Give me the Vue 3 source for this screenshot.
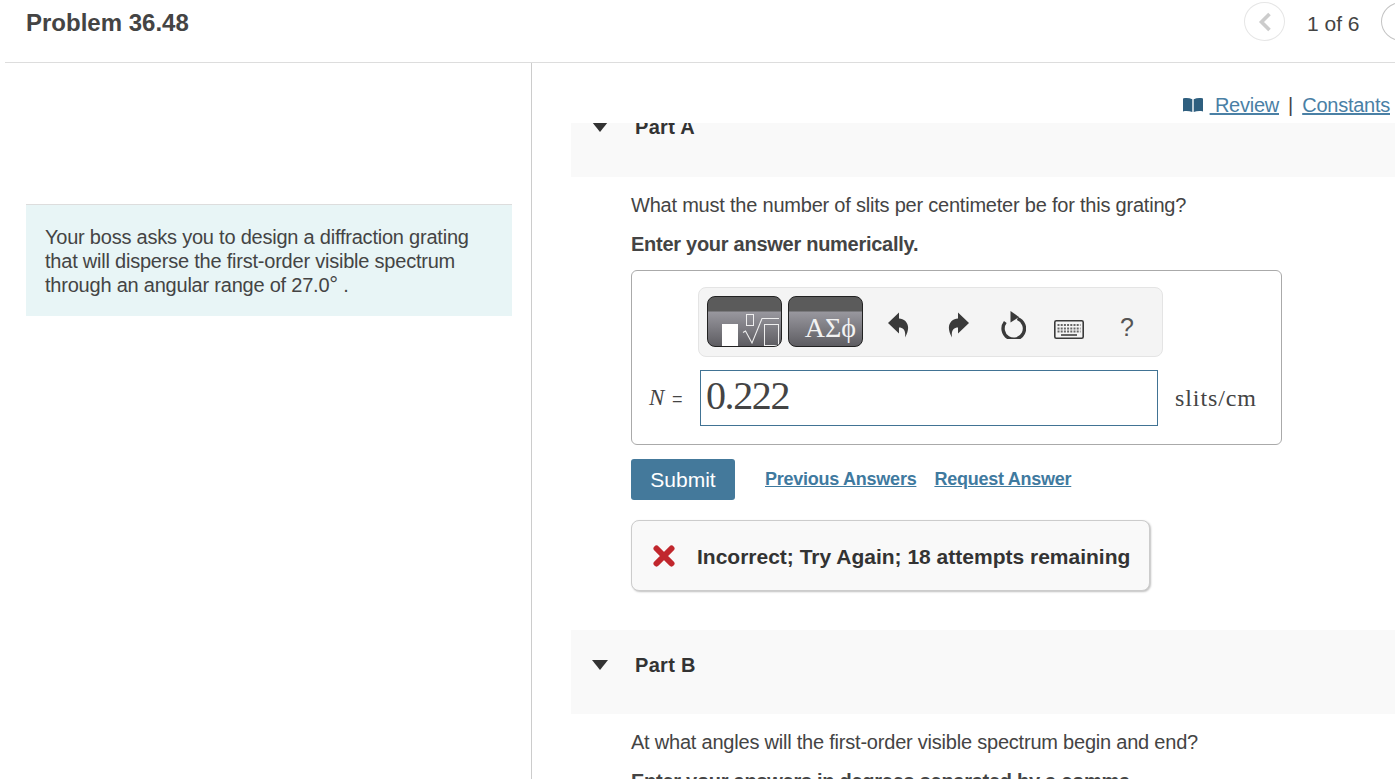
<script setup>
const parts = {
  a: 'What must the number of slits per centimeter be for this grating?',
  b: 'At what angles will the first-order visible spectrum begin and end?'
}
</script>

<template>
  <div class="page">
    <header class="top">
      <h1 class="title">Problem 36.48</h1>
      <nav class="pager">
        <button class="circle prev" aria-label="Previous">
          <svg width="14" height="20" viewBox="0 0 14 20"><path d="M11.5 2 L3.5 10 L11.5 18" fill="none" stroke="#ccc" stroke-width="3.6"/></svg>
        </button>
        <span class="count">1 of 6</span>
        <button class="circle next" aria-label="Next"></button>
      </nav>
    </header>

    <div class="columns">
      <aside class="left">
        <div class="intro">
          Your boss asks you to design a diffraction grating that will disperse the first-order visible spectrum through an angular range of 27.0<span class="deg">°</span> .
        </div>
      </aside>

      <main class="right">
        <div class="tools">
          <svg class="book" width="20" height="14" viewBox="0 0 20 14"><path d="M0 0.5 C3 -0.2 6.5 0 9.3 1.2 V14 C6.5 13 3 12.8 0 13.4 Z M20 0.5 C17 -0.2 13.5 0 10.7 1.2 V14 C13.5 13 17 12.8 20 13.4 Z" fill="#2f5f7f"/></svg>
          <a class="link">&nbsp;Review</a>
          <span class="pipe">|</span>
          <a class="link">Constants</a>
        </div>

        <div class="scroll">
          <section class="part-head clipped">
            <span class="tri"></span><span class="part-name">Part A</span>
          </section>

          <div class="body">
            <p class="q">{{ parts.a }}</p>
            <p class="ins">Enter your answer numerically.</p>

            <div class="answer">
              <div class="toolbar">
                <div class="tbtn">
                  <svg class="tpl" width="75" height="36" viewBox="0 0 75 36">
                    <rect x="15" y="14" width="16" height="22" fill="#fff"/>
                    <rect x="39.5" y="4.5" width="7" height="11" fill="none" stroke="#eee" stroke-width="1"/>
                    <path d="M36 22.5 L38.5 21 L45 33 L55 8.5 H72" fill="none" stroke="#eee" stroke-width="1.1"/>
                    <rect x="57.5" y="14.5" width="14" height="21" fill="none" stroke="#eee" stroke-width="1"/>
                  </svg>
                </div>
                <div class="tbtn greek"><span>ΑΣϕ</span></div>

                <svg class="ic undo" width="22" height="26" viewBox="0 0 22 26"><path d="M0 11 L11 0.5 V6.5 C18 7 24 13.5 17 25.5 C18 18.5 15.5 15.5 11 15.5 V21.5 Z" fill="#3a3a3a"/></svg>
                <svg class="ic redo" width="22" height="26" viewBox="0 0 22 26"><path d="M22 11 L11 0.5 V6.5 C4 7 -2 13.5 5 25.5 C4 18.5 6.5 15.5 11 15.5 V21.5 Z" fill="#3a3a3a"/></svg>
                <svg class="ic reset" width="26" height="28" viewBox="0 0 26 28">
                  <path d="M5.3 11 A10.7 10.7 0 1 0 17.5 7.5" fill="none" stroke="#3a3a3a" stroke-width="3.4"/>
                  <path d="M10.5 0 L19 6 L10.5 11.5 Z" fill="#3a3a3a"/>
                </svg>
                <svg class="ic kbd" width="30" height="19" viewBox="0 0 30 19">
                  <rect x="0.8" y="0.8" width="28.4" height="17.4" rx="1.5" fill="#f4f4f4" stroke="#3a3a3a" stroke-width="1.6"/>
                  <path d="M3.5 5 H26.5 M3.5 8.5 H26.5 M3.5 11.5 H26.5" stroke="#666" stroke-width="2" stroke-dasharray="2 1.2"/>
                  <path d="M7 15 H23" stroke="#555" stroke-width="1.8"/>
                </svg>
                <span class="help">?</span>
              </div>

              <div class="row">
                <span class="label"><i>N</i> <span class="eq">=</span></span>
                <div class="input">0.222</div>
                <span class="unit">slits/cm</span>
              </div>
            </div>

            <div class="actions">
              <button class="submit">Submit</button>
              <a class="act first-act">Previous Answers</a>
              <a class="act">Request Answer</a>
            </div>

            <div class="feedback">
              <svg width="22" height="22" viewBox="0 0 22 22"><path d="M3.5 3.5 L18.5 18.5 M18.5 3.5 L3.5 18.5" stroke="#c1272d" stroke-width="6" stroke-linecap="round"/></svg>
              <span>Incorrect; Try Again; 18 attempts remaining</span>
            </div>
          </div>

          <section class="part-head">
            <span class="tri"></span><span class="part-name">Part B</span>
          </section>

          <div class="body">
            <p class="q">{{ parts.b }}</p>
            <p class="ins">Enter your answers in degrees separated by a comma.</p>
          </div>
        </div>
      </main>
    </div>
  </div>
</template>

<style>
html, body { margin: 0; overflow: hidden; background: #fff; }
</style>

<style scoped>
.page {
  width: 1395px;
  height: 779px;
  overflow: hidden;
  display: flex;
  flex-direction: column;
  font-family: "Liberation Sans", Arial, sans-serif;
  color: #444;
}
.top {
  height: 63px;
  margin-left: 5px;
  border-bottom: 1px solid #ddd;
  box-sizing: border-box;
  display: flex;
  justify-content: space-between;
  flex: none;
  overflow: hidden;
}
.title {
  margin: 9px 0 0 21px;
  font-size: 24px;
  line-height: 28px;
  font-weight: 700;
  color: #444;
}
.pager {
  display: flex;
  align-items: flex-start;
  width: 151px;
  flex: none;
}
.circle {
  width: 41px;
  height: 39px;
  margin-top: 2px;
  border-radius: 50%;
  background: #fff;
  border: 1px solid #e6e6e6;
  padding: 0;
  display: flex;
  align-items: center;
  justify-content: center;
  flex: none;
}
.next { border-color: #c4c4c4; margin-left: 21px; }
.count {
  margin: 12px 0 0 22px;
  font-size: 21px;
  line-height: 24px;
  white-space: nowrap;
}
.columns { flex: 1; display: flex; min-height: 0; }
.left {
  flex: none;
  width: 532px;
  box-sizing: border-box;
  border-right: 1px solid #ccc;
  padding: 141px 19px 0 26px;
}
.intro {
  background: #e8f5f6;
  border-top: 1px solid #ddd;
  padding: 20px 19px 19px;
  font-size: 20px;
  line-height: 24px;
  letter-spacing: -0.22px;
  color: #444;
  height: 112px;
  box-sizing: border-box;
}
.deg { font-size: 22px; line-height: 0; }
.right { flex: 1; min-width: 0; display: flex; flex-direction: column; }
.tools {
  height: 60px;
  flex: none;
  display: flex;
  align-items: flex-start;
  justify-content: flex-end;
  padding: 30px 5px 0 0;
  box-sizing: border-box;
  font-size: 20px;
  line-height: 24px;
}
.book { margin-top: 5px; margin-right: 7px; }
.link { color: #4a80a5; text-decoration: underline; letter-spacing: -0.25px; }
.pipe { margin: 0 9px; color: #444; }
.scroll { flex: 1; overflow: hidden; min-height: 0; }
.part-head {
  margin-left: 39px;
  height: 84px;
  background: #f9f9f9;
  display: flex;
  align-items: flex-start;
  padding: 23px 0 0 21px;
  box-sizing: border-box;
}
.clipped { margin-top: -31px; height: 85px; }
.tri {
  width: 0;
  height: 0;
  border-left: 8.5px solid transparent;
  border-right: 8.5px solid transparent;
  border-top: 10px solid #333;
  margin-top: 7px;
}
.part-name {
  margin-left: 27px;
  font-size: 20px;
  line-height: 24px;
  font-weight: 700;
  letter-spacing: 0.3px;
  color: #333;
}
.body { margin-left: 99px; padding-top: 16px; }
.q { margin: 0; font-size: 20px; line-height: 24px; letter-spacing: -0.215px; color: #444; white-space: nowrap; }
.ins { margin: 15px 0 0; font-size: 20px; line-height: 24px; font-weight: 700; letter-spacing: -0.27px; color: #444; white-space: nowrap; }
.answer {
  margin-top: 14px;
  width: 651px;
  height: 175px;
  box-sizing: border-box;
  border: 1px solid #aaa;
  border-radius: 6px;
  padding: 16px 0 0 66px;
}
.toolbar {
  width: 465px;
  height: 70px;
  box-sizing: border-box;
  border: 1px solid #e4e4e4;
  border-radius: 8px;
  background: #f4f4f4;
  display: flex;
  align-items: flex-start;
  padding: 8px 0 0 8px;
}
.tbtn {
  width: 75px;
  height: 51px;
  box-sizing: border-box;
  border: 1px solid #222;
  border-radius: 8px;
  overflow: hidden;
  background: linear-gradient(#5b5b5b 0, #5b5b5b 14px, #98979e 15px, #5e5d62 100%);
  margin-right: 6px;
  flex: none;
  display: flex;
  align-items: flex-end;
}
.tpl { display: block; margin-left: -1px; flex: none; }
.greek span {
  width: 100%;
  text-align: right;
  padding-right: 6px;
  box-sizing: border-box;
  font-family: "Liberation Serif", serif;
  font-size: 28px;
  line-height: 37px;
  color: #f2f2f2;
}
.ic { flex: none; display: block; }
.undo { margin: 16px 0 0 19px; }
.redo { margin: 16px 0 0 37px; }
.reset { margin: 15px 0 0 31px; }
.kbd { margin: 24px 0 0 28px; }
.help {
  margin: 17px 0 0 36px;
  font-size: 25px;
  line-height: 28px;
  color: #555;
}
.row {
  display: flex;
  align-items: center;
  margin: 13px 0 0 -66px;
  padding-left: 17px;
}
.label { width: 51px; flex: none; font-family: "Liberation Serif", serif; font-size: 23px; color: #444; }
.eq { font-family: "Liberation Sans", sans-serif; font-size: 18px; margin-left: 2px; }
.input {
  width: 458px;
  height: 56px;
  box-sizing: border-box;
  border: 1px solid #417394;
  padding-left: 5px;
  font-family: "Liberation Serif", serif;
  font-size: 40px;
  letter-spacing: -1.4px;
  line-height: 50px;
  color: #444;
}
.unit {
  margin-left: 17px;
  font-family: "Liberation Serif", serif;
  font-size: 24px;
  letter-spacing: 0.9px;
  color: #444;
}
.actions { display: flex; align-items: center; margin-top: 14px; }
.submit {
  width: 104px;
  height: 41px;
  border: 0;
  border-radius: 3px;
  background: #44799b;
  color: #fff;
  font-family: "Liberation Sans", sans-serif;
  font-size: 21px;
  padding: 0;
}
.act {
  font-size: 18px;
  font-weight: 700;
  letter-spacing: -0.25px;
  color: #3f7a9f;
  text-decoration: underline;
  margin-left: 18px;
}
.first-act { margin-left: 30px; }
.feedback {
  margin-top: 20px;
  width: 519px;
  height: 71px;
  box-sizing: border-box;
  background: #f9f9f9;
  border: 1px solid #ccc;
  border-radius: 8px;
  box-shadow: 1px 1px 2px rgba(0,0,0,.25);
  display: flex;
  align-items: center;
  padding-left: 21px;
  font-size: 21px;
  font-weight: 700;
  color: #333;
  white-space: nowrap;
}
.feedback span { margin: 2px 0 0 22px; }
.body:has(.feedback) { padding-bottom: 39px; }
</style>
